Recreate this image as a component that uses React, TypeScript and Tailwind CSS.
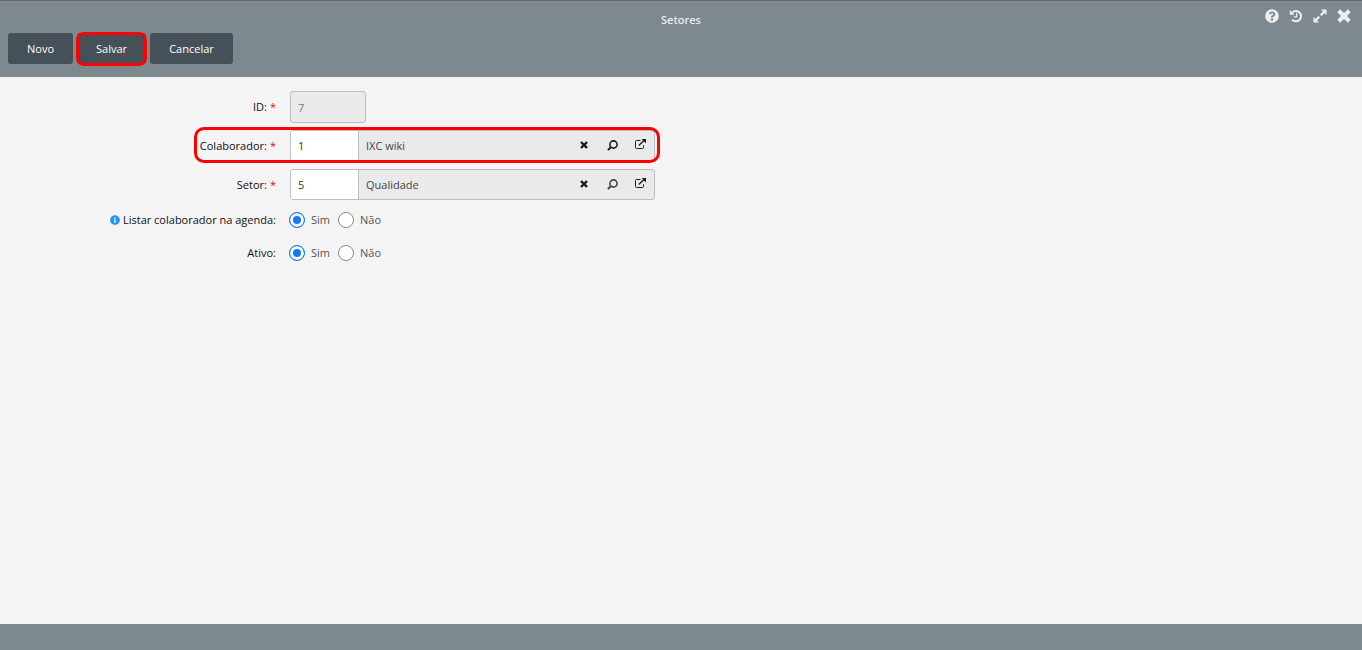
import type { ReactNode } from 'react';
import { FaInfoCircle, FaQuestionCircle } from 'react-icons/fa';

const toolbar = [
  { label: 'Novo', width: 'w-[65px]' },
  { label: 'Salvar', width: 'w-[69px]', highlighted: true },
  { label: 'Cancelar', width: 'w-[83px]' },
];

function CloseIcon({ className }: { className: string }) {
  return (
    <svg viewBox="0 0 14 14" className={className} fill="none" stroke="currentColor" aria-hidden="true">
      <path d="M3.2 3.2 10.8 10.8M10.8 3.2 3.2 10.8" strokeWidth="4.2" strokeLinecap="square" />
    </svg>
  );
}

function HistoryIcon() {
  return (
    <svg viewBox="0 0 14 14" className="h-3.5 w-3.5" fill="none" stroke="currentColor" aria-hidden="true">
      <path d="M3.2 3.4A5.2 5.2 0 1 1 3 10.6" strokeWidth="2" />
      <path d="M.8 1v4.8h4.8z" fill="currentColor" stroke="none" />
      <path d="M7.6 4v3.8H5" strokeWidth="1.3" />
    </svg>
  );
}

function ExpandIcon() {
  return (
    <svg viewBox="0 0 14 14" className="h-3.5 w-3.5" fill="currentColor" aria-hidden="true">
      <path d="M8 0.5h5.5V6L11.6 4.1 8.6 7.1 6.9 5.4l3-3zM6 13.5H0.5V8l1.9 1.9 3-3 1.7 1.7-3 3z" />
    </svg>
  );
}

function SearchIcon() {
  return (
    <svg viewBox="0 0 11 11" className="h-[11px] w-[11px]" fill="none" stroke="currentColor" aria-hidden="true">
      <circle cx="6.5" cy="4.5" r="3.6" strokeWidth="1.6" />
      <path d="M3.6 7.4 1.5 9.5" strokeWidth="2" strokeLinecap="round" />
    </svg>
  );
}

function ExternalLinkIcon() {
  return (
    <svg viewBox="0 0 12 11" className="h-[11px] w-3" fill="none" aria-hidden="true">
      <path d="M6.5 1.5H2.5Q1.5 1.5 1.5 2.5v6q0 1 1 1h6q1 0 1-1V6.3" stroke="currentColor" />
      <path d="M4.8 6.4 10 1.6" stroke="currentColor" strokeWidth="1.4" />
      <path d="M7.6 0H12v4.4z" fill="currentColor" />
    </svg>
  );
}

// Red frame drawn over the element that the reader has to look at.
function Highlight({ className }: { className: string }) {
  return <span className={`pointer-events-none absolute border-3 border-[#fe0000] ${className}`} />;
}

type RowProps = { label: string; htmlFor?: string; id?: string; required?: boolean; info?: boolean; children: ReactNode };

function Row({ label, htmlFor, id, required, info, children }: RowProps) {
  const content = (
    <>
      {info && <FaInfoCircle className="h-2.5 w-2.5 text-[#2196f3]" aria-hidden="true" />}
      <span>{label}:</span>
      {required && <span className="text-[#ff0000]">*</span>}
    </>
  );
  const labelClass = 'flex items-center justify-end gap-[3px] text-[#111111]';

  return (
    <div className="grid grid-cols-[276px_1fr] items-center gap-x-3.5">
      {htmlFor ? (
        <label htmlFor={htmlFor} className={labelClass}>{content}</label>
      ) : (
        <span id={id} className={labelClass}>{content}</span>
      )}
      {children}
    </div>
  );
}

type LookupProps = { id: string; code: string; name: string; muted?: boolean };

function Lookup({ id, code, name, muted }: LookupProps) {
  return (
    <div className="flex h-[31px] w-[365px] items-stretch overflow-hidden rounded-[3px] border border-[#b9bfc4] bg-[#eaeaea] text-[#444444]">
      <input
        id={id}
        defaultValue={code}
        className="w-[68px] border-r border-[#b9bfc4] bg-white px-[7px] text-[#333333] outline-none"
      />
      <span className="flex flex-1 items-center px-[7px]">{name}</span>
      <div className="flex items-center pb-0.5 text-[#1c1c1c]">
        <button type="button" aria-label="Limpar" className="flex w-7 justify-center">
          <CloseIcon className="h-2 w-2" />
        </button>
        <button type="button" aria-label="Pesquisar" className={`flex w-7 justify-center pt-0.5 ${muted ? 'text-[#444444]' : ''}`}>
          <SearchIcon />
        </button>
        <button type="button" aria-label="Abrir" className="flex w-7 justify-center">
          <ExternalLinkIcon />
        </button>
      </div>
    </div>
  );
}

function YesNo({ name, labelledBy }: { name: string; labelledBy: string }) {
  return (
    <div role="radiogroup" aria-labelledby={labelledBy} className="-ml-px flex items-center gap-2">
      {['Sim', 'Não'].map((option) => (
        <label key={option} className="flex items-center gap-1.5 text-[#555555]">
          <input
            type="radio"
            name={name}
            value={option}
            defaultChecked={option === 'Sim'}
            className="m-0 h-4 w-4 appearance-none rounded-full border border-[#858b93] bg-white checked:border-[#1479f5] checked:bg-[#1479f5] checked:shadow-[inset_0_0_0_3px_white]"
          />
          {option}
        </label>
      ))}
    </div>
  );
}

export default function App() {
  return (
    <div className="flex min-h-screen flex-col bg-[#f4f4f4] font-['Open_Sans','Noto_Sans',sans-serif] text-[11px] leading-4">
      <header className="border-t border-[#666666] bg-[#7d898e] pb-[13px]">
        <div className="grid h-8 grid-cols-[1fr_auto_1fr] items-start px-[11px]">
          <h1 className="col-start-2 pt-[11px] font-semibold text-[#e9ebec]">Setores</h1>
          <div className="flex items-center justify-end gap-2.5 pt-2 text-[#eeeeee]">
            <button type="button" aria-label="Ajuda"><FaQuestionCircle className="h-3.5 w-3.5" /></button>
            <button type="button" aria-label="Histórico"><HistoryIcon /></button>
            <button type="button" aria-label="Expandir"><ExpandIcon /></button>
            <button type="button" aria-label="Fechar"><CloseIcon className="h-3.5 w-3.5" /></button>
          </div>
        </div>
        <div className="flex gap-1 px-2">
          {toolbar.map((item) => (
            <div key={item.label} className="relative">
              <button type="button" className={`h-[31px] rounded-[3px] bg-[#465059] text-white ${item.width}`}>
                {item.label}
              </button>
              {item.highlighted && <Highlight className="-inset-x-px -top-px -bottom-0.5 rounded-lg" />}
            </div>
          ))}
        </div>
      </header>

      <main className="flex-1 pt-3.5">
        <form className="flex flex-col" onSubmit={(e) => e.preventDefault()}>
          <Row label="ID" htmlFor="id" required>
            <input
              id="id"
              value="7"
              disabled
              className="h-8 w-[76px] rounded-[3px] border border-[#b9bfc4] bg-[#eaeaea] px-[7px] text-[#777777]"
            />
          </Row>
          <div className="relative mt-[7px] w-[655px]">
            <Row label="Colaborador" htmlFor="colaborador" required>
              <Lookup id="colaborador" code="1" name="IXC wiki" />
            </Row>
            <Highlight className="-top-[3px] -right-[5px] -bottom-0.5 left-[194px] rounded-[10px]" />
          </div>
          <div className="mt-2">
            <Row label="Setor" htmlFor="setor" required>
              <Lookup id="setor" code="5" name="Qualidade" muted />
            </Row>
          </div>
          <div className="mt-3 flex flex-col gap-[17px]">
            <Row label="Listar colaborador na agenda" id="listar-label" info>
              <YesNo name="listar" labelledBy="listar-label" />
            </Row>
            <Row label="Ativo" id="ativo-label">
              <YesNo name="ativo" labelledBy="ativo-label" />
            </Row>
          </div>
        </form>
      </main>

      <footer className="h-[26px] bg-[#7d898e]" />
    </div>
  );
}
